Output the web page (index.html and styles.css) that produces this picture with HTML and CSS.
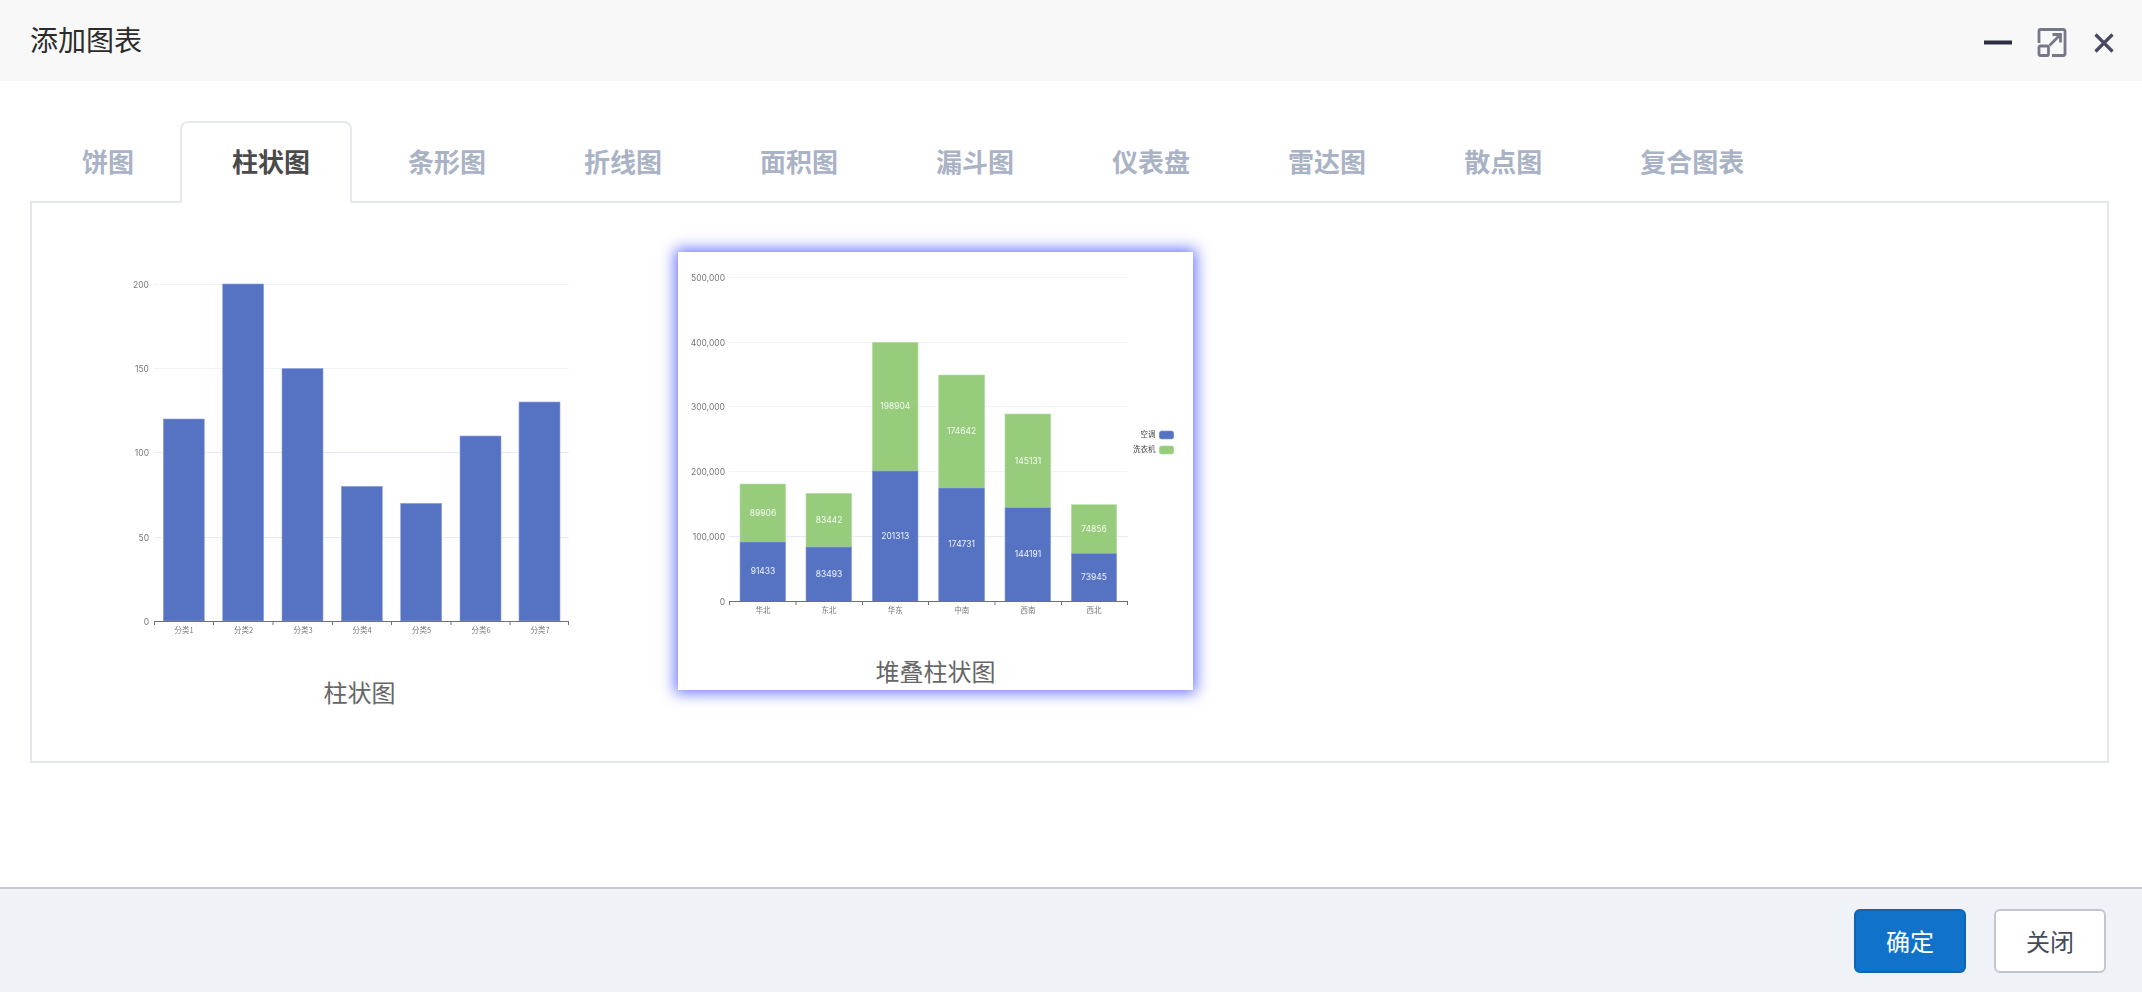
FILE: index.html
```html
<!DOCTYPE html>
<html lang="zh-CN">
<head>
<meta charset="utf-8">
<title>添加图表</title>
<link rel="stylesheet" href="styles.css">
</head>
<body>
<div class="dialog">
  <header class="head">
    <h1 class="title">添加图表</h1>
    <div class="win-tools">
      <svg class="ico" width="28" height="30" viewBox="0 0 28 30"><rect x="0" y="12.5" width="28" height="4" fill="#2e2e42"/></svg>
      <svg class="ico soft" width="30" height="30" viewBox="0 0 30 30" fill="none" stroke="#77778a" stroke-width="2.8"><path d="M2 15V3a1.500 1.500 0 0 1 1.500-1.500h23A1.500 1.500 0 0 1 28 3v23a1.500 1.500 0 0 1-1.500 1.500H15"/><rect x="2" y="18" width="9.500" height="9.500" rx="1.500"/><path d="M12.500 17.500 23 7M15.500 6.500H23.500V14.500"/></svg>
      <svg class="ico soft close" width="20" height="20" viewBox="0 0 20 20" fill="none" stroke="#484860" stroke-width="3.200"><path d="M1.500 1.500 18.500 18.500M18.500 1.500 1.500 18.500"/></svg>
    </div>
  </header>
  <main class="body">
    <nav class="tabs">
      <a class="tab">饼图</a>
      <a class="tab active">柱状图</a>
      <a class="tab">条形图</a>
      <a class="tab">折线图</a>
      <a class="tab">面积图</a>
      <a class="tab">漏斗图</a>
      <a class="tab">仪表盘</a>
      <a class="tab">雷达图</a>
      <a class="tab">散点图</a>
      <a class="tab">复合图表</a>
    </nav>
    <section class="panel">
      <figure class="card">
        <svg class="chart chart-tall" viewBox="0 0 515 421">
          <g class="grid">
            <path class="g1" d="M52 32.500H467"/><path class="g1" d="M52 116.500H467"/><path class="g2" d="M52 200.500H467"/><path class="g2" d="M52 285.500H467"/>
          </g>
          <g class="bars-blue">
            <rect x="61.300" y="167" width="41" height="202"/>
            <rect x="120.700" y="32" width="41" height="337"/>
            <rect x="180" y="116.500" width="41" height="252.500"/>
            <rect x="239.300" y="234.300" width="41" height="134.700"/>
            <rect x="298.700" y="251.300" width="41" height="117.700"/>
            <rect x="358" y="184" width="41" height="185"/>
            <rect x="417" y="150" width="41" height="219"/>
          </g>
          <path class="axis" d="M52 369.500H467M52.500 369V373M111.500 369V373M171 369V373M230.500 369V373M289.500 369V373M349 369V373M408 369V373M466.500 369V373"/>
          <g class="ylab">
            <text x="47" y="36">200</text><text x="47" y="120">150</text><text x="47" y="204">100</text><text x="47" y="289">50</text><text x="47" y="373">0</text>
          </g>
          <g class="xlab">
            <text x="82" y="381">分类1</text><text x="141.500" y="381">分类2</text><text x="201" y="381">分类3</text><text x="260" y="381">分类4</text><text x="319.500" y="381">分类5</text><text x="379" y="381">分类6</text><text x="438" y="381">分类7</text>
          </g>
        </svg>
        <figcaption class="caption">柱状图</figcaption>
      </figure>
      <figure class="card selected">
        <svg class="chart" viewBox="0 0 515 400">
          <g class="grid">
            <path class="g1" d="M51 25.500H449.500"/><path class="g1" d="M51 90.500H449.500"/><path class="g1" d="M51 154.500H449.500"/><path class="g1" d="M51 219.500H449.500"/><path class="g2" d="M51 284.500H449.500"/>
          </g>
          <g class="bars-green">
            <rect x="62" y="232" width="45.700" height="58"/>
            <rect x="128" y="241.300" width="45.700" height="53.700"/>
            <rect x="194.300" y="90.300" width="45.700" height="128.700"/>
            <rect x="260.700" y="123" width="46" height="113"/>
            <rect x="327" y="162" width="45.700" height="93.700"/>
            <rect x="393.300" y="252.700" width="45.400" height="48.600"/>
          </g>
          <g class="bars-blue">
            <rect x="62" y="290" width="45.700" height="59.500"/>
            <rect x="128" y="295" width="45.700" height="54.500"/>
            <rect x="194.300" y="219" width="45.700" height="130.500"/>
            <rect x="260.700" y="236" width="46" height="113.500"/>
            <rect x="327" y="255.700" width="45.700" height="93.800"/>
            <rect x="393.300" y="301.300" width="45.400" height="48.200"/>
          </g>
          <path class="axis" d="M51 349.500H450M51.500 349V353M118 349V353M184.500 349V353M250.500 349V353M317 349V353M383.500 349V353M449.500 349V353"/>
          <g class="ylab">
            <text x="47" y="29">500,000</text><text x="47" y="94">400,000</text><text x="47" y="158">300,000</text><text x="47" y="223">200,000</text><text x="47" y="288">100,000</text><text x="47" y="353">0</text>
          </g>
          <g class="xlab">
            <text x="85" y="360.500">华北</text><text x="151" y="360.500">东北</text><text x="217.300" y="360.500">华东</text><text x="283.700" y="360.500">中南</text><text x="350" y="360.500">西南</text><text x="416" y="360.500">西北</text>
          </g>
          <g class="vlab">
            <text x="85" y="263.500">89906</text><text x="151" y="271">83442</text><text x="217.300" y="157">198904</text><text x="283.700" y="182">174642</text><text x="350" y="211.500">145131</text><text x="416" y="279.500">74856</text>
            <text x="85" y="322">91433</text><text x="151" y="325">83493</text><text x="217.300" y="287">201313</text><text x="283.700" y="295">174731</text><text x="350" y="305">144191</text><text x="416" y="328">73945</text>
          </g>
          <g class="leg">
            <text x="477.500" y="185">空调</text><text x="477.500" y="200">洗衣机</text>
          </g>
          <rect class="swatch-blue" x="481" y="178.700" width="15" height="8.600" rx="2.500"/>
          <rect class="swatch-green" x="481" y="193.700" width="15" height="8.600" rx="2.500"/>
        </svg>
        <figcaption class="caption">堆叠柱状图</figcaption>
      </figure>
    </section>
  </main>
  <footer class="foot">
    <button class="btn primary">确定</button>
    <button class="btn">关闭</button>
  </footer>
</div>
</body>
</html>
```
FILE: styles.css
```css
* { box-sizing: border-box; }
html, body { margin: 0; padding: 0; height: 100%; background: #fff; }
body { font-family: "Noto Sans CJK SC", "Noto Sans", sans-serif; overflow: hidden; }

.dialog { height: 992px; display: flex; flex-direction: column; }

.head {
  height: 81px; flex: none; background: #f8f8f8;
  display: flex; align-items: center; justify-content: space-between;
  padding: 0 28px 0 30px;
}
.title { margin: 0; font-size: 28px; font-weight: 400; color: #2b2b2b; line-height: 1; position: relative; top: -2px; }
.win-tools { display: flex; align-items: center; gap: 25px; margin-top: 5px; }
.ico { display: block; flex: none; }
.soft { filter: blur(0.4px); }
.close { margin-left: 2px; }

.body { flex: 1; padding: 40px 33px 0 30px; }

.tabs { display: flex; height: 82px; position: relative; z-index: 1; }
.tab {
  display: flex; align-items: center;
  padding: 0 40px 5px 50px; margin-right: 4px;
  height: 82px; border: 2px solid transparent; border-bottom: 0;
  font-size: 26px; font-weight: 700; color: #a9b3c5; line-height: 1;
}
.tab.active {
  color: #4a4a4a; background: #fff; border-color: #e6e9ee;
  border-radius: 8px 8px 0 0;
}

.panel {
  height: 562px; margin-top: -2px;
  border: 2px solid #e3e7eb;
  padding: 49px 0 0 70px;
  display: flex; align-items: flex-start; gap: 61px;
}
.card { margin: 0; width: 515px; flex: none; background: #fff; }
.card.selected { box-shadow: 0 0 14px 3px #6a74ff; height: 438px; }
.chart { display: block; width: 515px; height: 400px; filter: blur(0.4px); }
.chart-tall { height: 421px; }
.caption { text-align: center; font-size: 24px; line-height: 38px; color: #666; }

.grid path { fill: none; stroke-width: 1; }
.g1 { stroke: #f2f3fa; }
.g2 { stroke: #e7e9f6; }
.bars-blue rect { fill: #5673c3; stroke: #8fa3dc; stroke-width: 0.6; }
.bars-green rect { fill: #96cc7b; stroke: #b7dfa5; stroke-width: 0.6; }
.axis { fill: none; stroke: #6e7079; stroke-width: 1; }
.ylab text { font-size: 8.500px; fill: #777; text-anchor: end; font-family: Inter, sans-serif; }
.xlab text { font-size: 7.500px; fill: #777; text-anchor: middle; }
.vlab text { font-size: 8.500px; fill: #fff; fill-opacity: 0.9; text-anchor: middle; font-family: Inter, sans-serif; }
.leg text { font-size: 7.500px; fill: #444; text-anchor: end; }
.swatch-blue { fill: #5673c3; stroke: #dfe4f5; stroke-width: 0.5; }
.swatch-green { fill: #96cc7b; stroke: #e3f2dc; stroke-width: 0.5; }

.foot {
  height: 105px; flex: none; background: #eff3f7;
  border-top: 2px solid #c8cacf;
  display: flex; align-items: center; justify-content: flex-end;
  gap: 28px; padding: 0 36px 0 0;
}
.btn {
  width: 112px; height: 64px; border-radius: 6px;
  font: 400 24px "Noto Sans CJK SC", sans-serif;
  background: #fff; color: #444b57; border: 2px solid #c2c6d0; padding: 0;
}
.btn.primary { background: #1073c9; color: #fff; border-color: #0f65b3; }
```
